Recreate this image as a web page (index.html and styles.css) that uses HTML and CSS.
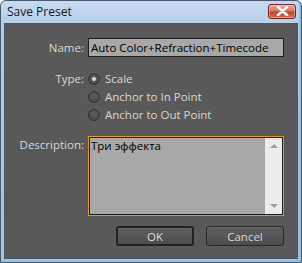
FILE: index.html
```html
<!DOCTYPE html>
<html>
<head>
<meta charset="utf-8">
<link rel="stylesheet" href="styles.css">
</head>
<body>
<div class="window">
  <div class="titlebar">
    <span class="title">Save Preset</span>
    <button class="close" aria-label="Close">
      <svg width="13" height="10" viewBox="0 0 13 10"><path d="M2 1 L11 9 M11 1 L2 9" stroke="#fff" stroke-width="2.6" stroke-linecap="round"/></svg>
    </button>
  </div>
  <div class="content">
    <div class="form">
      <label class="lbl name-lbl">Name:</label>
      <div class="field name-field">Auto Color+Refraction+Timecode</div>

      <label class="lbl type-lbl">Type:</label>
      <div class="radios">
        <div class="radio-row"><span class="radio checked"></span><span>Scale</span></div>
        <div class="radio-row"><span class="radio"></span><span>Anchor to In Point</span></div>
        <div class="radio-row"><span class="radio"></span><span>Anchor to Out Point</span></div>
      </div>

      <label class="lbl desc-lbl">Description:</label>
      <div class="textarea">
        <div class="ta-text">Три эффекта</div>
        <div class="scrollbar">
          <span class="arrow up"></span>
          <span class="arrow down"></span>
        </div>
      </div>
    </div>
    <div class="buttons">
      <button class="btn default">OK</button>
      <button class="btn">Cancel</button>
    </div>
  </div>
</div>
</body>
</html>
```
FILE: styles.css
```css
* { box-sizing: border-box; }
html, body { margin: 0; padding: 0; background: #fff; }
body { font-family: "Open Sans", "Noto Sans", sans-serif; font-size: 11.5px; }

.window {
  width: 302px;
  height: 263px;
  border: 1px solid #4a5a6c;
  border-radius: 6px 6px 0 0;
  background: linear-gradient(#c7daee, #b3cbe6 12%, #a6c1e0 100%);
  display: flex;
  flex-direction: column;
  padding: 0 3px 3px 3px;
  box-shadow: inset 0 -2px 0 #86c4ee, inset -2px 0 0 #86c4ee;
}

.titlebar {
  height: 22px;
  display: flex;
  align-items: center;
  justify-content: space-between;
  padding: 0 2px 0 3px;
}
.title {
  font-family: "Open Sans", sans-serif;
  font-size: 12px;
  color: #1a1a1a;
  margin-top: -1px;
}
.close {
  width: 28px;
  height: 15px;
  margin-top: -2px;
  border: 1px solid #6a2a2a;
  border-radius: 3px;
  background: linear-gradient(#e8a595, #d9735f 45%, #c04a33 55%, #cf6a4f);
  padding: 0;
  display: flex;
  align-items: center;
  justify-content: center;
  box-shadow: inset 0 0 0 1px rgba(255,255,255,0.35);
}

.content {
  flex: 1;
  background: #595959;
  border: 1px solid #4c5866;
  display: flex;
  flex-direction: column;
  padding: 14px 13px 0 0;
  color: #d6d6d6;
}

.form {
  display: grid;
  grid-template-columns: 79px 1fr;
  column-gap: 4px;
}
.lbl {
  text-align: right;
  color: #d6d6d6;
}
.name-lbl { line-height: 19px; }
.field {
  height: 19px;
  background: #a8a8a8;
  border: 1px solid #1e1e1e;
  color: #000;
  line-height: 17px;
  padding-left: 2px;
  white-space: nowrap;
  overflow: hidden;
}

.type-lbl { margin-top: 15px; line-height: 13px; }
.radios { margin-top: 15px; display: flex; flex-direction: column; gap: 5px; }
.radio-row { display: flex; align-items: center; gap: 5px; height: 13px; line-height: 13px; }
.radio {
  width: 12px;
  height: 12px;
  border-radius: 50%;
  border: 1px solid #303030;
  background: radial-gradient(circle at 50% 40%, #5e5e5e, #474747);
  box-shadow: 0 0 0 0.5px #6a6a6a;
  display: flex;
  align-items: center;
  justify-content: center;
}
.radio.checked::after {
  content: "";
  width: 4px;
  height: 4px;
  border-radius: 50%;
  background: #d8d8d8;
}

.desc-lbl { margin-top: 15px; line-height: 17px; }
.textarea {
  margin-top: 15px;
  height: 80px;
  border: 1px solid #e0a000;
  background: #a8a8a8;
  display: flex;
  box-shadow: inset 0 0 0 1px #1e1e1e;
}
.ta-text {
  flex: 1;
  color: #000;
  padding: 1px 2px;
  line-height: 15px;
}
.scrollbar {
  width: 17px;
  margin: 1px 1px 1px 0;
  background: #ececec;
  display: flex;
  flex-direction: column;
  justify-content: space-between;
  align-items: center;
  padding: 6px 0 6px;
}
.arrow { width: 0; height: 0; border-left: 4px solid transparent; border-right: 4px solid transparent; }
.arrow.up { border-bottom: 4px solid #a0a0a0; }
.arrow.down { border-top: 4px solid #a0a0a0; }

.buttons {
  display: flex;
  justify-content: flex-end;
  gap: 12px;
  margin-top: 10px;
}
.btn {
  width: 78px;
  height: 20px;
  border: 1px solid #2a2a2a;
  border-radius: 3px;
  background: linear-gradient(#5f5f5f, #4c4c4c);
  color: #d8d8d8;
  font-family: "Open Sans", sans-serif;
  font-size: 11.5px;
  padding: 0;
  box-shadow: inset 0 1px 0 #6a6a6a;
}
.btn.default {
  border: 2px solid #232323;
}
```
